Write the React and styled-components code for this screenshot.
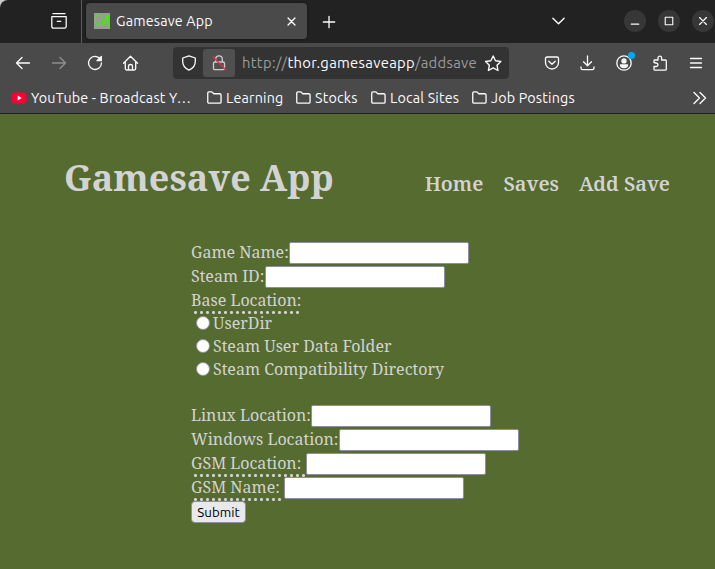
import React from "react";
import styled, { createGlobalStyle } from "styled-components";

const Global = createGlobalStyle`
  * { box-sizing: border-box; }
  body { margin: 0; background: #556b2f; overflow: hidden; }
`;

const ui = `"Ubuntu", "Noto Sans", "Open Sans", sans-serif`;
const serif = `"Noto Serif", "Droid Serif", "DejaVu Serif Condensed", "DejaVu Serif", serif`;

const Window = styled.div`
  width: 715px;
  height: 569px;
  display: flex;
  flex-direction: column;
  background: #c9c9c9;
  overflow: hidden;
  font-family: ${ui};
  color: #fbfbfe;
`;
const TabBar = styled.header`
  flex: 0 0 43px;
  display: flex;
  align-items: center;
  background: #222;
  border-top-left-radius: 8px;
`;
const Slot = styled.div`
  flex: 0 0 ${(p) => p.$w}px;
  height: 100%;
  display: flex;
  align-items: center;
  justify-content: center;
  position: relative;
`;
const TabView = styled(Slot)`
  padding: 0 0 1px 37px;
  border-right: 1px solid #5b5b5b;
`;
const Tab = styled.div`
  width: 221px;
  height: 36px;
  margin: 0 0 1px 4px;
  padding: 0 10px 0 8px;
  display: flex;
  align-items: center;
  border-radius: 4px;
  background: #4a4a4a;
  box-shadow: 0 0 3px #0008;
`;
const Label = styled.span`
  font-size: 14.3px;
  letter-spacing: 0.18px;
  line-height: 20px;
  white-space: pre;
  color: #fbfbfe;
`;
const UrlPart = styled(Label)`
  font-size: 14.8px;
  letter-spacing: 0.3px;
  color: ${(p) => (p.$dim ? "#9b9b9c" : "#fbfbfe")};
`;
const TabTitle = styled(Label)`
  flex: 1;
  margin-left: 6px;
`;
const Spacer = styled.div`
  flex: 1;
`;
const WindowButtons = styled.div`
  flex: none;
  display: flex;
  gap: 12px;
  margin: 0 1px 1px 58px;
`;
const WindowButton = styled.div`
  width: 22px;
  height: 22px;
  display: grid;
  place-items: center;
  border-radius: 50%;
  background: #373737;
`;
const Toolbar = styled.nav`
  flex: 0 0 40px;
  display: flex;
  align-items: center;
  padding-left: 5px;
  background: #4a4a4a;
`;
const UrlBar = styled.div`
  width: 336px;
  height: 32px;
  margin: 0 25px 0 24px;
  flex: none;
  display: flex;
  align-items: center;
  border-radius: 4px;
  background: #333;
`;
const LockButton = styled.div`
  width: 32px;
  height: 28px;
  margin-right: 7px;
  flex: none;
  display: grid;
  place-items: center;
  border-radius: 3px;
  background: #505050;
`;
const Address = styled.div`
  flex: 1;
  white-space: nowrap;
  display: flex;
`;
const Dot = styled.i`
  position: absolute;
  top: 9px;
  right: 7px;
  width: 7px;
  height: 7px;
  border-radius: 50%;
  background: #00a8f5;
`;
const Bookmarks = styled.nav`
  flex: 0 0 31px;
  display: flex;
  align-items: center;
  padding: 0 7px 1px 11px;
  background: #4a4a4a;
  border-bottom: 1px solid #202020;
`;
const Bookmark = styled.div`
  flex: 0 0 ${(p) => p.$w}px;
  display: flex;
  align-items: center;
  gap: 4px;
`;
const Page = styled.main`
  flex: 1;
  background: #556b2f;
  color: lightgray;
  font-family: ${serif};
`;
const PageHeader = styled.div`
  height: 127px;
  padding: 38px 45px 0 64px;
  display: flex;
  justify-content: space-between;
  align-items: baseline;
`;
const Title = styled.h1`
  margin: 0;
  font-size: 36px;
  line-height: 52px;
  white-space: nowrap;
`;
const Links = styled.div`
  display: flex;
  gap: 20px;
`;
const PageLink = styled.a`
  font-size: 20px;
  font-weight: 600;
  white-space: nowrap;
`;
const Form = styled.form`
  margin-left: 191px;
`;
const Row = styled.div`
  height: 24px;
  display: flex;
  align-items: center;
`;
const HintRow = styled(Row)`
  margin-bottom: -1px;
`;
const RadioRow = styled(Row)`
  height: 23px;
`;
const RadioGroup = styled.div`
  margin-bottom: 23px;
`;
const FieldLabel = styled.label`
  width: ${(p) => (p.$w ? `${p.$w}px` : "auto")};
  height: 24px;
  flex: none;
  font-size: 16px;
  line-height: 22px;
  white-space: pre;
`;
const HintLabel = styled(FieldLabel)`
  height: 26px;
  padding-top: 1px;
  background: radial-gradient(circle at 1.5px 1.5px, lightgray 1.2px, transparent 1.8px) 3px 100% / 6px 3px repeat-x;
`;
const Input = styled.input`
  width: 180px;
  height: 22px;
  padding: 1px 2px;
  border: 1px solid #8f8f9d;
  border-radius: 2px;
  background: #fff;
  outline: none;
`;
const Radio = styled.input`
  appearance: none;
  width: 14px;
  height: 14px;
  margin: 0 3px 1px 5px;
  border: 1px solid #8f8f9d;
  border-radius: 50%;
  background: #fff;
`;
const Submit = styled.button`
  width: 55px;
  height: 22px;
  padding: 1px 0 0;
  border: 1px solid #8f8f9d;
  border-radius: 4px;
  background: #e9e9ed;
  color: #000;
  font: 13.3px/19px ${ui};
`;

const Icon = ({ size = 16, children, color = "#fbfbfe", sw = 1.3 }) => (
  <svg width={size} height={size} viewBox="0 0 16 16" fill="none" stroke={color} strokeWidth={sw} strokeLinecap="round" strokeLinejoin="round">
    {children}
  </svg>
);
const Folder = () => (
  <Icon size={15} sw={1.4}>
    <path d="M.8 12.7V3.2q0-1.2 1.2-1.2h3.2l2 2h6.3q1.5 0 1.5 1.4v7.3q0 1.3-1.3 1.3H2.1q-1.3 0-1.3-1.3z" />
  </Icon>
);

const locations = ["UserDir", "Steam User Data Folder", "Steam Compatibility Directory"];
const fields = [
  { label: "Linux Location:", w: 120 },
  { label: "Windows Location:", w: 148 },
  { label: "GSM Location: ", w: 115, hint: true },
  { label: "GSM Name: ", w: 93, hint: true },
];
const Field = ({ label, w, hint }) => {
  const L = hint ? HintLabel : FieldLabel;
  return (
    <Row>
      <L $w={w}>{label}</L>
      <Input />
    </Row>
  );
};

export default function App() {
  return (
    <Window>
      <Global />
      <TabBar>
        <TabView $w={82}>
          <Icon><path d="M2 .7h12M.8 3.7h14.4v9.8q0 1.7-1.7 1.7h-11Q.8 15.2.8 13.5zM6.3 8.3h3.4" /></Icon>
        </TabView>
        <Tab>
          <svg width="16" height="16" viewBox="0 0 16 16" fill="none" stroke="#4be713" strokeWidth="1.2">
            <rect width="16" height="16" fill="#999" stroke="none" />
            <path d="M5.500 2.500C3 .5 1.200 3 1.200 7s2 6.500 4.300 5V8h-2" />
            <path d="M9.800 2.300C7.500 2 6.500 4.500 8 6.500s2 5-1 6" />
            <path d="M9.800 13 12 1.500l3 14M10.500 8.500h4M14.300 2v7" />
          </svg>
          <TabTitle>Gamesave App</TabTitle>
          <Icon size={11} sw={2}><path d="m3 3 10 10M13 3 3 13" /></Icon>
        </Tab>
        <Slot $w={43}><Icon size={14} sw={1.5}><path d="M8 1.5v13M1.5 8h13" /></Icon></Slot>
        <Spacer />
        <Icon size={15} sw={1.5}><path d="m2 4.5 6 6 6-6" /></Icon>
        <WindowButtons>
          <WindowButton><Icon size={10} sw={1.8}><path d="M2 13h12" /></Icon></WindowButton>
          <WindowButton><Icon size={10} sw={1.8}><path d="M2 2h12v12H2z" /></Icon></WindowButton>
          <WindowButton><Icon size={10} sw={2}><path d="m2.5 2.5 11 11M13.5 2.5l-11 11" /></Icon></WindowButton>
        </WindowButtons>
      </TabBar>
      <Toolbar>
        <Slot $w={36}><Icon><path d="M14.5 8h-13M7 2.5 1.5 8 7 13.5" /></Icon></Slot>
        <Slot $w={36}><Icon color="#8f8f90"><path d="M1.5 8h13M9 2.5 14.5 8 9 13.5" /></Icon></Slot>
        <Slot $w={36}><Icon><path d="M13.3 4.2A6.5 6.5 0 1 0 14.5 8" /><path d="M14.3 1.5v4.2H10z" fill="#fbfbfe" /></Icon></Slot>
        <Slot $w={36}><Icon><path d="M.5 8.3 7.5 1.2l7 7.1M2.3 7v6.5q0 1.5 1.5 1.5h7.4q1.5 0 1.5-1.5V7M5.500 15v-4q0-1.5 2-1.5t2 1.5v4" /></Icon></Slot>
        <UrlBar>
          <Slot $w={30}><Icon><path d="M9 .8 15.3 3v3.5q0 5.8-6.3 8.700-6.300-2.900-6.300-8.700V3z" /></Icon></Slot>
          <LockButton>
            <Icon color="#cfcfd0"><path d="M4.700 7V4.200a3.300 3.300 0 0 1 6.600 0V7M4 7h8q1.500 0 1.500 1.500v4.700q0 1.500-1.500 1.500H4q-1.500 0-1.500-1.500V8.500Q2.500 7 4 7z" /><path d="m2 2 12.500 12.500" stroke="#e22850" /></Icon>
          </LockButton>
          <Address>
            <UrlPart $dim>http://</UrlPart>
            <UrlPart>thor.gamesaveapp</UrlPart>
            <UrlPart $dim>/addsave</UrlPart>
          </Address>
          <Slot $w={32}><Icon size={17}><path d="m7.700 .9 2.200 4.500 5 .7-3.600 3.500.9 5-4.500-2.400-4.500 2.400.9-5L.5 6.100l5-.7z" /></Icon></Slot>
        </UrlBar>
        <Slot $w={36}><Icon><path d="M3 2h10q1.500 0 1.500 1.500V7.500a6.500 6.500 0 0 1-13 0V3.500Q1.500 2 3 2zM4.800 6.200 8 9.300l3.200-3.100" /></Icon></Slot>
        <Slot $w={36}><Icon><path d="M7.500 1v9.500M3.500 6.800l4 4 4-4M1 12v1q0 1.700 1.700 1.700h9.600q1.700 0 1.700-1.700v-1" /></Icon></Slot>
        <Slot $w={36}>
          <Icon><circle cx="8" cy="8" r="7.200" /><circle cx="8" cy="5.900" r="2" fill="#fbfbfe" /><path d="M4.500 10h7q0 2.500-3.500 2.500T4.500 10z" fill="#fbfbfe" /></Icon>
          <Dot />
        </Slot>
        <Slot $w={36}><Icon><path d="M2 7.500V5.700q0-.7.700-.7H6V3a1.800 1.800 0 0 1 3.600 0v2h3.700q1 0 1 1v8.200q0 1-1 1H3q-1 0-1-1v-2.700h2.200a1.700 1.700 0 0 0 0-3.500z" /></Icon></Slot>
        <Slot $w={36}><Icon><path d="M2.500 3.500h11M2.500 8h11M2.500 12.500h11" /></Icon></Slot>
      </Toolbar>
      <Bookmarks>
        <Bookmark $w={196}>
          <svg width="16" height="12" viewBox="0 0 16 12"><rect x="1" y=".5" width="14.500" height="11" rx="3" fill="#f03" /><path d="M6.700 3.500v5L10.700 6z" fill="#fff" /></svg>
          <Label>YouTube - Broadcast Y…</Label>
        </Bookmark>
        <Bookmark $w={89}><Folder /><Label>Learning</Label></Bookmark>
        <Bookmark $w={75}><Folder /><Label>Stocks</Label></Bookmark>
        <Bookmark $w={101}><Folder /><Label>Local Sites</Label></Bookmark>
        <Bookmark $w={110}><Folder /><Label>Job Postings</Label></Bookmark>
        <Spacer />
        <Icon sw={1.4}><path d="m2 2.500 5.500 5.500L2 13.500M8 2.500 13.500 8 8 13.500" /></Icon>
      </Bookmarks>
      <Page>
        <PageHeader>
          <Title>Gamesave App</Title>
          <Links>
            <PageLink>Home</PageLink>
            <PageLink>Saves</PageLink>
            <PageLink>Add Save</PageLink>
          </Links>
        </PageHeader>
        <Form>
          <Field label="Game Name:" w={98} />
          <Field label="Steam ID:" w={74} />
          <HintRow><HintLabel $w={110}>Base Location:</HintLabel></HintRow>
          <RadioGroup>
            {locations.map((name) => (
              <RadioRow key={name}><Radio type="radio" name="base" /><FieldLabel>{name}</FieldLabel></RadioRow>
            ))}
          </RadioGroup>
          {fields.map((f) => <Field key={f.label} {...f} />)}
          <Row><Submit type="button">Submit</Submit></Row>
        </Form>
      </Page>
    </Window>
  );
}
